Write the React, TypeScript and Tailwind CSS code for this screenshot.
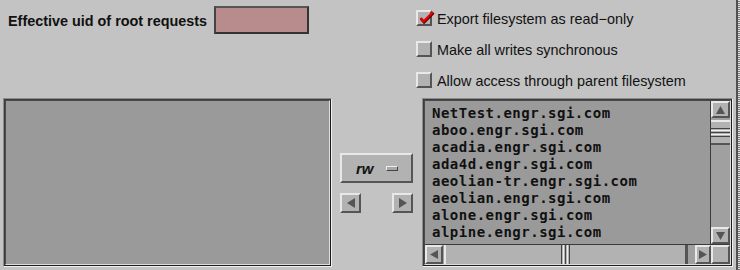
const raised =
  "border-2 border-t-[#e8e8e8] border-l-[#e8e8e8] border-r-[#555555] border-b-[#555555] bg-[#b2b2b2]";

const hosts = [
  "NetTest.engr.sgi.com",
  "aboo.engr.sgi.com",
  "acadia.engr.sgi.com",
  "ada4d.engr.sgi.com",
  "aeolian-tr.engr.sgi.com",
  "aeolian.engr.sgi.com",
  "alone.engr.sgi.com",
  "alpine.engr.sgi.com",
];

function Tri({ dir, w = 9, h = 9 }: { dir: "up" | "down" | "left" | "right"; w?: number; h?: number }) {
  const pts =
    dir === "up"
      ? `${w / 2},0 ${w},${h} 0,${h}`
      : dir === "down"
        ? `0,0 ${w},0 ${w / 2},${h}`
        : dir === "left"
          ? `${w},0 ${w},${h} 0,${h / 2}`
          : `0,0 ${w},${h / 2} 0,${h}`;
  return (
    <svg width={w} height={h} viewBox={`0 0 ${w} ${h}`}>
      <polygon points={pts} fill="#555555" />
    </svg>
  );
}

function Check({ label, checked }: { label: string; checked?: boolean }) {
  return (
    <div className="flex h-[16px] items-center gap-[5px]">
      <div className={`relative h-[16px] w-[16px] ${raised} bg-[#ababab]`}>
        {checked && (
          <svg
            className="absolute left-[-2px] top-[-3px] overflow-visible"
            width="20"
            height="18"
            viewBox="0 0 20 18"
          >
            <path d="M4.5 9 L7.5 12.5 L17 3" fill="none" stroke="#5a0000" strokeWidth="2.6" transform="translate(0.6 0.8)" />
            <path d="M4.5 9 L7.5 12.5 L17 3" fill="none" stroke="#e60000" strokeWidth="2.4" />
          </svg>
        )}
      </div>
      <span className="pt-[3px] text-[14.4px] leading-none text-[#111]">{label}</span>
    </div>
  );
}

function Sunken({ className, children }: { className?: string; children: React.ReactNode }) {
  return (
    <div
      className={`flex border border-t-[#8c8c8c] border-l-[#8c8c8c] border-r-[#f0f0f0] border-b-[#f0f0f0] ${className ?? ""}`}
    >
      <div className="flex flex-1 border border-t-[#3c3c3c] border-l-[#3c3c3c] border-r-[#1c1c1c] border-b-[#1c1c1c]">
        <div className="flex flex-1 flex-col border border-t-[#4a4a4a] border-l-[#4a4a4a] border-r-[#dcdcdc] border-b-[#dcdcdc] bg-[#9a9a9a]">
          {children}
        </div>
      </div>
    </div>
  );
}

function ScrolledList() {
  return (
    <Sunken className="ml-[9px] w-[311px]">
      <div className="flex h-[143px]">
        <div className="flex-1 border-r border-r-[#3a3a3a] pl-[7px] pt-[4px] font-['DejaVu_Sans_Mono',monospace] text-[14px] font-bold leading-[17px] tracking-[0.5px] text-[#111]">
          {hosts.map((h) => (
            <div key={h}>{h}</div>
          ))}
        </div>
        <div className="flex w-[19px] flex-col bg-[#a0a0a0]">
          <div className={`flex h-[17px] items-center justify-center ${raised}`}>
            <Tri dir="up" w={9} h={8} />
          </div>
          <div className="flex-1 pt-[2px]">
            <div className={`flex h-[25px] flex-col justify-center gap-[1px] ${raised} border-x-0`}>
              <div className="h-[1px] bg-[#444]" />
              <div className="h-[1px] bg-[#eee]" />
              <div className="h-[1px] bg-[#444]" />
              <div className="h-[1px] bg-[#eee]" />
              <div className="h-[1px] bg-[#444]" />
            </div>
          </div>
          <div className={`flex h-[17px] items-center justify-center ${raised}`}>
            <Tri dir="down" w={9} h={8} />
          </div>
        </div>
      </div>
      <div className="flex h-[20px] border-t border-t-[#3a3a3a]">
        <div className="flex flex-1 bg-[#a0a0a0]">
          <div className={`flex w-[18px] items-center justify-center ${raised}`}>
            <Tri dir="left" w={8} h={9} />
          </div>
          <div className={`ml-[1px] flex w-[243px] justify-center gap-[1px] ${raised} border-y-0`}>
            <div className="w-[1px] bg-[#444]" />
            <div className="w-[1px] bg-[#eee]" />
            <div className="w-[1px] bg-[#444]" />
            <div className="w-[1px] bg-[#eee]" />
            <div className="w-[1px] bg-[#444]" />
          </div>
          <div className="flex-1 border-l border-l-[#555]" />
          <div className={`flex w-[16px] items-center justify-center ${raised}`}>
            <Tri dir="right" w={8} h={9} />
          </div>
        </div>
        <div className={`w-[19px] ${raised}`} />
      </div>
    </Sunken>
  );
}

export default function App() {
  return (
    <div className="flex h-[270px] w-[740px] overflow-hidden bg-[#c3c3c3] font-['Liberation_Sans',Arial,sans-serif] text-black">
      <div className="flex w-[736px] flex-col">
        <div className="flex h-[98px]">
          <div className="flex w-[416px] items-start pl-[8px] pt-[6px]">
            <div className="flex h-[28px] items-center gap-[7px]">
              <span className="pt-[2px] text-[14.4px] font-bold leading-none text-[#111]">
                Effective uid of root requests
              </span>
              <div className="h-[28px] w-[95px] border-2 border-t-[#555] border-l-[#444] border-r-[#333] border-b-[#333] bg-[#b88c8d]" />
            </div>
          </div>
          <div className="flex flex-col gap-[15px] pt-[10px]">
            <Check checked label="Export filesystem as read−only" />
            <Check label="Make all writes synchronous" />
            <Check label="Allow access through parent filesystem" />
          </div>
        </div>
        <div className="flex h-[169px] pl-[3px]">
          <Sunken className="w-[329px]">
            <div className="flex-1" />
          </Sunken>
          <div className="ml-[8px] flex w-[73px] flex-col pt-[55px]">
            <div className={`flex h-[30px] items-center pl-[14px] ${raised}`}>
              <span className="text-[15px] font-bold italic leading-none text-[#111]">rw</span>
              <div className="ml-[12px] h-[5px] w-[12px] border border-t-[#eee] border-l-[#eee] border-r-[#444] border-b-[#444] bg-[#a8a8a8]" />
            </div>
            <div className="mt-[10px] flex justify-between">
              <div className={`flex h-[20px] w-[21px] items-center justify-center ${raised}`}>
                <Tri dir="left" w={8} h={10} />
              </div>
              <div className={`flex h-[20px] w-[21px] items-center justify-center ${raised}`}>
                <Tri dir="right" w={8} h={10} />
              </div>
            </div>
          </div>
          <ScrolledList />
        </div>
      </div>
      <div className="w-[2px] bg-[#505050]" />
      <div className="w-[2px] bg-[repeating-linear-gradient(180deg,#e4e4e4_0_1px,#7a7a7a_1px_2px)]" />
    </div>
  );
}
